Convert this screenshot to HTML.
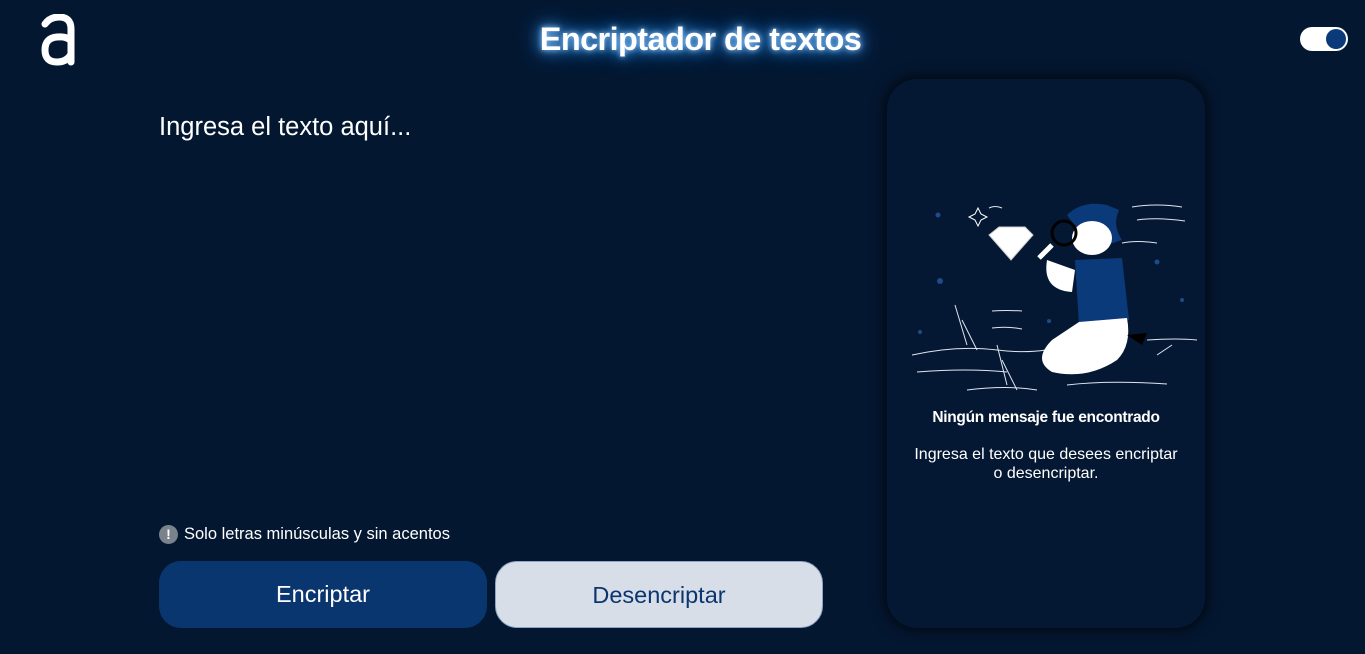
<!DOCTYPE html>
<html><head><meta charset="utf-8"><style>
html,body{margin:0;padding:0;width:1365px;height:654px;overflow:hidden;background:#041731;font-family:"Liberation Sans",sans-serif;color:#fff;position:relative}
.logo{position:absolute;left:40px;top:14px}
h1{position:absolute;left:0;width:1401px;top:21px;margin:0;text-align:center;font-size:32.5px;font-weight:700;letter-spacing:-0.6px;text-shadow:0 0 6px #9cf,0 0 14px #4af,0 0 24px #28f}
.tog{position:absolute;left:1300px;top:27px;width:48px;height:24px;border-radius:12px;background:#fff}
.tog i{position:absolute;right:2px;top:2px;width:20px;height:20px;border-radius:50%;background:#0a3a7a}
.ph{position:absolute;left:159px;top:113px;font-size:25.5px;color:#fff}
.note{position:absolute;left:159px;top:525px;font-size:16.5px;display:flex;align-items:center}
.note b{width:19px;height:19px;border-radius:50%;background:#7a828c;color:#fff;font-size:14px;text-align:center;line-height:19px;margin-right:6px}
.btn{position:absolute;top:561px;width:328px;height:67px;border-radius:22px;font-size:23.5px;text-align:center;line-height:67px;box-sizing:border-box}
.b1{left:159px;background:#0a3670;color:#fff}
.b2{left:495px;background:#d8dee8;color:#0a3670;border:1px solid #8fa4c4}
.panel{position:absolute;left:887px;top:79px;width:318px;height:549px;border-radius:30px;background:#051833;box-shadow:0 0 12px 4px rgba(0,0,0,.55)}
.t1{position:absolute;left:0;width:100%;top:330px;text-align:center;font-weight:700;font-size:15.5px;letter-spacing:-0.3px}
.t2{position:absolute;left:0;width:318px;top:366px;text-align:center;font-size:16px;line-height:19px}
</style></head><body>
<svg class="logo" width="40" height="52" viewBox="0 0 40 52" fill="none" stroke="#fff" stroke-width="7" stroke-linecap="round">
<path d="M5 10 Q10 3 19 3 Q31 3 31 15 L31 48"/>
<path d="M31 27 Q27 22 17 23 Q5 24 5 36 Q5 48 17 48 Q27 48 31 40"/>
</svg>
<h1>Encriptador de textos</h1>
<div class="tog"><i></i></div>
<div class="ph">Ingresa el texto aquí...</div>
<div class="note"><b>!</b>Solo letras minúsculas y sin acentos</div>
<div class="btn b1">Encriptar</div>
<div class="btn b2">Desencriptar</div>
<div class="panel">
<svg width="318" height="220" viewBox="880 180 318 220" style="position:absolute;left:0;top:101px" fill="none" stroke="#dfe6f0" stroke-width="1">
<path d="M905 355 Q950 345 990 350 T1060 345 M910 372 Q960 368 1000 372 M960 390 Q1000 385 1030 390 M1060 385 Q1100 380 1160 384 M1140 340 Q1170 338 1190 340"/>
<path d="M948 305 L960 345 M955 320 L970 350 M990 345 L1000 385 M995 360 L1010 390 M1150 355 L1165 345"/>
<path d="M982 208 Q988 205 995 208 M1125 207 Q1150 203 1175 207 M1130 220 Q1150 217 1178 221 M1115 243 Q1130 240 1150 243 M985 311 Q1000 310 1015 311 M985 328 Q1000 326 1015 329"/>
<polygon points="982,235 992,227 1018,227 1026,235 1004,260" fill="#fff" stroke="#ccc"/>
<path d="M971 208 l3 6 l6 3 l-6 3 l-3 6 l-3 -6 l-6 -3 l6 -3z" stroke="#fff"/>
<path d="M1060 215 Q1075 200 1100 205 L1112 210 Q1105 225 1115 240 L1085 250 Z" fill="#0a3a7a" stroke="none"/>
<ellipse cx="1085" cy="238" rx="20" ry="17" fill="#fff" stroke="none"/>
<circle cx="1057" cy="233" r="12" stroke="#000" stroke-width="3"/>
<path d="M1045 245 L1032 258" stroke="#fff" stroke-width="5"/>
<path d="M1040 260 Q1035 290 1065 292 L1068 270 Z" fill="#fff" stroke="none"/>
<path d="M1068 260 L1115 258 L1122 320 L1072 325 Z" fill="#0a3a7a" stroke="none"/>
<path d="M1072 322 L1120 318 Q1125 345 1110 360 Q1080 380 1045 372 Q1025 360 1045 340 Z" fill="#fff" stroke="none"/>
<path d="M1120 335 L1140 333 L1135 345 Z" fill="#000" stroke="none"/>
<circle cx="931" cy="215" r="2.5" fill="#1e4a8a" stroke="none"/><circle cx="933" cy="281" r="3" fill="#1e4a8a" stroke="none"/><circle cx="1150" cy="262" r="2.5" fill="#1e4a8a" stroke="none"/><circle cx="1175" cy="300" r="2" fill="#1e4a8a" stroke="none"/><circle cx="1042" cy="321" r="2" fill="#1e4a8a" stroke="none"/><circle cx="913" cy="332" r="2" fill="#1e4a8a" stroke="none"/>
</svg>
<div class="t1">Ningún mensaje fue encontrado</div>
<div class="t2">Ingresa el texto que desees encriptar<br>o desencriptar.</div>
</div>
</body></html>
